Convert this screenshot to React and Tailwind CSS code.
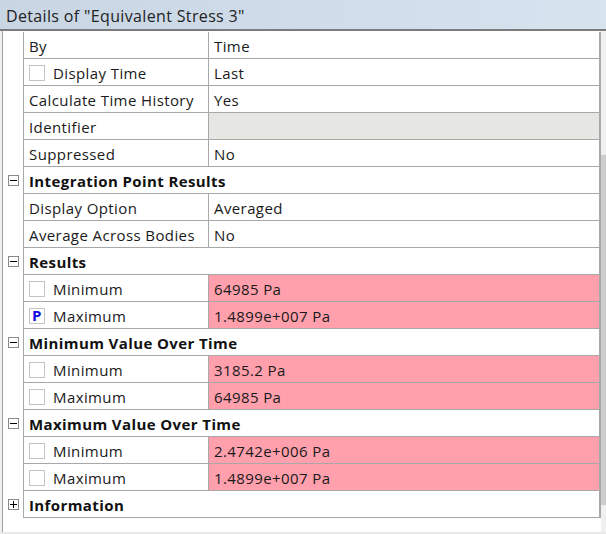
import React from "react";

const rows = [
  { label: "By", value: "Time" },
  { label: "Display Time", value: "Last", check: true },
  { label: "Calculate Time History", value: "Yes" },
  { label: "Identifier", value: "", grey: true },
  { label: "Suppressed", value: "No" },
  { header: "Integration Point Results", open: true },
  { label: "Display Option", value: "Averaged" },
  { label: "Average Across Bodies", value: "No" },
  { header: "Results", open: true },
  { label: "Minimum", value: "64985 Pa", check: true, red: true },
  { label: "Maximum", value: "1.4899e+007 Pa", check: true, p: true, red: true },
  { header: "Minimum Value Over Time", open: true },
  { label: "Minimum", value: "3185.2 Pa", check: true, red: true },
  { label: "Maximum", value: "64985 Pa", check: true, red: true },
  { header: "Maximum Value Over Time", open: true },
  { label: "Minimum", value: "2.4742e+006 Pa", check: true, red: true },
  { label: "Maximum", value: "1.4899e+007 Pa", check: true, red: true },
  { header: "Information", open: false },
];

const ToggleBox = ({ open }) => (
  <div className="w-[11px] h-[11px] border border-[#8a8a8a] bg-white flex items-center justify-center">
    <svg width="7" height="7" viewBox="0 0 7 7">
      <rect x="0" y="3" width="7" height="1" fill="#000" />
      {!open && <rect x="3" y="0" width="1" height="7" fill="#000" />}
    </svg>
  </div>
);

const CheckBox = ({ p }) => (
  <div className="w-[16px] h-[16px] border border-[#c4c4c4] bg-white flex items-center justify-center mr-[8px] shrink-0 -mt-[2px]">
    {p && <span className="text-[#1010e0] font-bold text-[15px] leading-none">P</span>}
  </div>
);

const Row = ({ row }) => {
  if (row.header) {
    return (
      <div className="flex h-[27px]">
        <div className="w-[20px] flex items-center justify-center pl-[1px]">
          <ToggleBox open={row.open} />
        </div>
        <div className="flex-1 border-l border-b border-[#a8a8a8] flex items-center pl-[5px] pt-[3px] font-bold text-[#111]">
          {row.header}
        </div>
      </div>
    );
  }
  return (
    <div className="flex h-[27px]">
      <div className="w-[20px]" />
      <div className="w-[185px] border-l border-b border-[#a8a8a8] flex items-center pl-[5px] pt-[3px]">
        {row.check && <CheckBox p={row.p} />}
        <span className="whitespace-nowrap">{row.label}</span>
      </div>
      <div
        className={`flex-1 border-l border-b border-[#a8a8a8] flex items-center pl-[5px] pt-[3px] ${
          row.red ? "bg-[#ffa0ac]" : row.grey ? "bg-[#e6e6e2]" : "bg-white"
        }`}
      >
        {row.value}
      </div>
    </div>
  );
};

export default function App() {
  return (
    <div
      className="w-[606px] h-[534px] bg-[#f0f0f0] flex flex-col overflow-hidden text-[15px] tracking-[0.4px] text-[#1a1a1a]"
      style={{ fontFamily: '"Open Sans", "Noto Sans", sans-serif' }}
    >
      <div className="h-[31px] shrink-0 bg-gradient-to-r from-[#c8d5e3] to-[#d7e3ef] flex items-center pl-[6px] pt-[2px] text-[16px] tracking-[0.35px] text-[#222] border-b-2 border-[#7c7c7c]">
        Details of "Equivalent Stress 3"
      </div>
      <div className="flex-1 flex ml-[2px] border-l border-[#a0a0a0] bg-white">
        <div className="flex-1 flex flex-col pt-[1px]">
          <div className="border-r-2 border-[#a8a8a8]">
            {rows.map((r, i) => (
              <Row key={i} row={r} />
            ))}
          </div>
        </div>
        <div className="w-[5px] flex flex-col bg-[#f0f0f0]">
          <div className="h-[124px]" />
          <div className="h-[350px] bg-[#cdcdcd]" />
        </div>
      </div>
      <div className="h-[2px] bg-[#e8e8e8]" />
    </div>
  );
}
